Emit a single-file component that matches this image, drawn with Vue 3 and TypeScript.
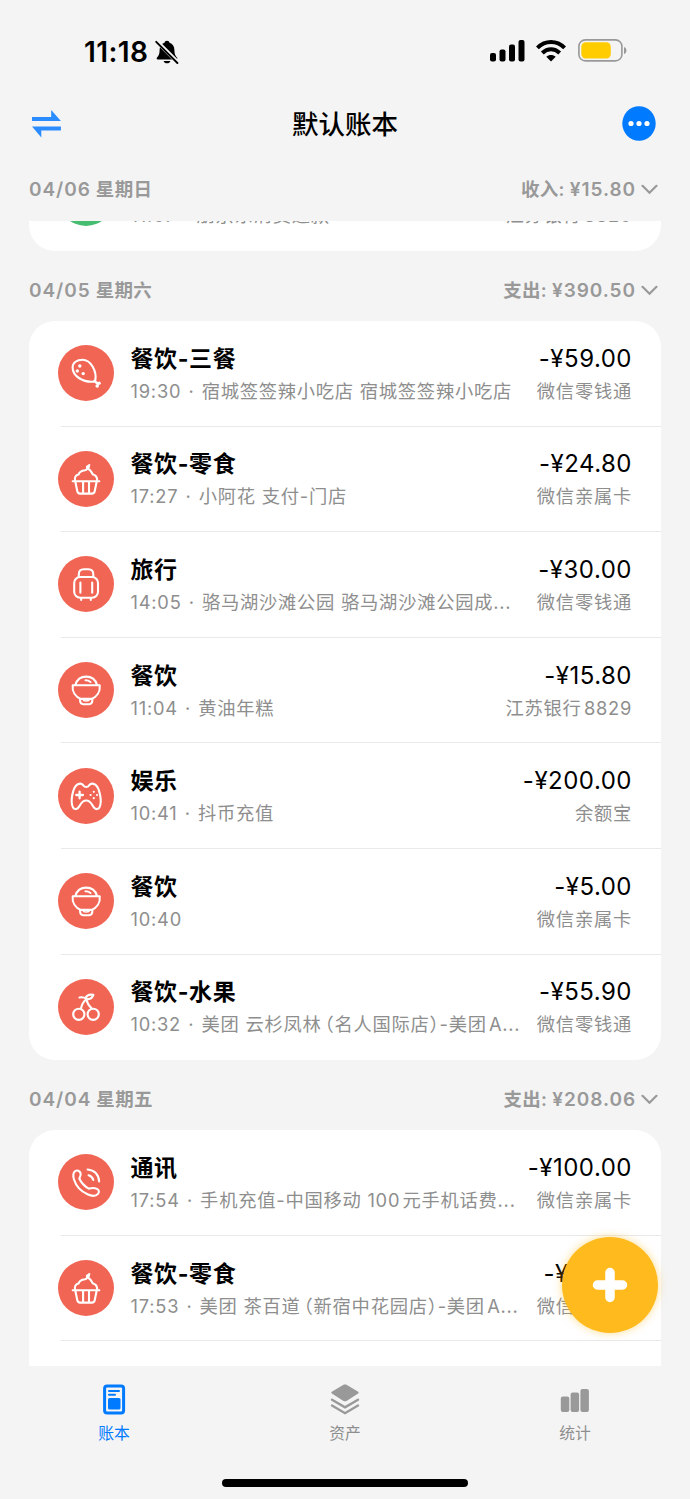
<script setup lang="ts">
type IconName = 'drumstick' | 'cupcake' | 'suitcase' | 'bowl' | 'gamepad' | 'cherry' | 'phone' | 'none'

interface Entry {
  icon: IconName
  title: string
  time: string
  note?: string
  amount: string
  account: string
  tone?: 'green'
}

interface Day {
  date: string
  weekday: string
  label: string
  total: string
  entries: Entry[]
}

const current: Day = {
  date: '04/06',
  weekday: '星期日',
  label: '收入:',
  total: '¥15.80',
  entries: [
    { icon: 'none', title: '退款', time: '11:37', note: '朋京东消费退款', amount: '+¥15.80', account: '江苏银行8829', tone: 'green' },
  ],
}

const days: Day[] = [
  current,
  {
    date: '04/05',
    weekday: '星期六',
    label: '支出:',
    total: '¥390.50',
    entries: [
      { icon: 'drumstick', title: '餐饮-三餐', time: '19:30', note: '宿城签签辣小吃店 宿城签签辣小吃店', amount: '-¥59.00', account: '微信零钱通' },
      { icon: 'cupcake', title: '餐饮-零食', time: '17:27', note: '小阿花 支付-门店', amount: '-¥24.80', account: '微信亲属卡' },
      { icon: 'suitcase', title: '旅行', time: '14:05', note: '骆马湖沙滩公园 骆马湖沙滩公园成...', amount: '-¥30.00', account: '微信零钱通' },
      { icon: 'bowl', title: '餐饮', time: '11:04', note: '黄油年糕', amount: '-¥15.80', account: '江苏银行8829' },
      { icon: 'gamepad', title: '娱乐', time: '10:41', note: '抖币充值', amount: '-¥200.00', account: '余额宝' },
      { icon: 'bowl', title: '餐饮', time: '10:40', amount: '-¥5.00', account: '微信亲属卡' },
      { icon: 'cherry', title: '餐饮-水果', time: '10:32', note: '美团 云杉凤林（名人国际店）-美团A...', amount: '-¥55.90', account: '微信零钱通' },
    ],
  },
  {
    date: '04/04',
    weekday: '星期五',
    label: '支出:',
    total: '¥208.06',
    entries: [
      { icon: 'phone', title: '通讯', time: '17:54', note: '手机充值-中国移动 100元手机话费...', amount: '-¥100.00', account: '微信亲属卡' },
      { icon: 'cupcake', title: '餐饮-零食', time: '17:53', note: '美团 茶百道（新宿中花园店）-美团A...', amount: '-¥19.90', account: '微信亲属卡' },
      { icon: 'none', title: '餐饮', time: '12:10', amount: '-¥12.00', account: '微信零钱通' },
    ],
  },
]

const parts = (note: string): string[] => note.split(/([（）])/)
const partClass = (p: string): string => (p === '（' ? 'open' : p === '）' ? 'close' : '')
</script>

<template>
  <div class="screen">
    <div class="status">
      <div class="clock">
        <span>11:18</span>
        <svg class="bell" width="24" height="24" viewBox="0 0 24 24">
          <path d="M12 .8c1.500 0 2.300.9 2.500 2 3.200 1 4.900 3.700 4.900 7.200 0 4.300 1.100 6 2.600 7.500.7.800.4 1.900-.8 1.900H2.800c-1.200 0-1.500-1.100-.8-1.900C3.500 16 4.600 14.300 4.600 10c0-3.500 1.700-6.200 4.900-7.200.2-1.100 1-2 2.500-2zM8.600 21h6.800c-.4 1.500-1.700 2.300-3.400 2.300S9 22.500 8.600 21z" fill="#000" />
          <path d="M1.500 1.100 23 22.600" stroke="#f4f4f4" stroke-width="4" />
          <path d="M1.200 1.800 22.400 23" stroke="#000" stroke-width="1.900" stroke-linecap="round" />
        </svg>
      </div>
      <div class="signals">
        <svg width="35" height="22" viewBox="0 0 35 22">
          <rect x="0" y="13" width="6" height="8.500" rx="2" />
          <rect x="9.500" y="9.500" width="6" height="12" rx="2" />
          <rect x="19" y="4.500" width="6" height="17" rx="2" />
          <rect x="28.500" y="0" width="6" height="21.500" rx="2" />
        </svg>
        <svg width="30" height="22" viewBox="0 0 30 22">
          <g fill="none" stroke="#000" stroke-width="4">
            <path d="M1.400 7.900C5.200 4.100 9.900 2 15 2s9.800 2.100 13.600 5.900" />
            <path d="M6.300 13C8.800 10.600 11.700 9.300 15 9.300s6.200 1.300 8.700 3.700" />
          </g>
          <path d="M15 21.500l-4.700-4.700c2.700-2.400 6.700-2.400 9.400 0z" />
        </svg>
        <svg width="49" height="24" viewBox="0 0 49 24">
          <rect x=".9" y=".9" width="43" height="21" rx="6.500" fill="none" stroke="#999" stroke-width="1.600" />
          <rect x="3.300" y="3.300" width="29.500" height="16.200" rx="4.500" fill="#fc0" />
          <path d="M46 8c3.200.8 3.200 6.200 0 7z" fill="#999" />
        </svg>
      </div>
    </div>

    <header class="nav">
      <svg width="30" height="28" viewBox="0 0 30 28" fill="#2b8cff">
        <path d="M0 7h19.200V0L28.900 11H0zM28.900 16.600H0l9.300 11v-7h19.600z" />
      </svg>
      <h1>默认账本</h1>
      <svg width="34" height="35" viewBox="0 0 34 35">
        <ellipse cx="17" cy="17.500" rx="16.700" ry="17.300" fill="#007aff" />
        <g fill="#fff"><circle cx="9" cy="17.500" r="2.600" /><circle cx="17" cy="17.500" r="2.600" /><circle cx="25" cy="17.500" r="2.600" /></g>
      </svg>
    </header>

    <div class="day-head pinned">
      <div class="date"><span class="num">{{ current.date }}</span><span>{{ current.weekday }}</span></div>
      <div class="sum"><span>{{ current.label }}</span><span class="num">{{ current.total }}</span>
        <svg width="17" height="11" viewBox="0 0 17 11"><path d="M1.500 1.800 8.500 8.800 15.500 1.800" /></svg>
      </div>
    </div>

    <main class="list">
      <section v-for="(day, di) in days" :key="di">
        <div v-if="di > 0" class="day-head">
          <div class="date"><span class="num">{{ day.date }}</span><span>{{ day.weekday }}</span></div>
          <div class="sum"><span>{{ day.label }}</span><span class="num">{{ day.total }}</span>
            <svg width="17" height="11" viewBox="0 0 17 11"><path d="M1.500 1.800 8.500 8.800 15.500 1.800" /></svg>
          </div>
        </div>
        <div class="card">
          <article v-for="(e, i) in day.entries" :key="i" class="row">
            <svg class="badge" :class="e.tone" viewBox="0 0 56 56">
              <circle class="disc" cx="28" cy="28" r="28" />
              <g v-if="e.icon === 'drumstick'" class="ln">
                <path d="M35.500 36.600C25.500 37.500 14.600 31.500 14.600 22.500c0-5 4.400-7.800 9.900-7.800C33 14.700 39 26.500 37.300 35.200z" />
                <path d="M36.600 36.200 40 38.800" stroke-width="2.600" />
                <circle class="dot" cx="41.200" cy="38.200" r="1.600" /><circle class="dot" cx="39.200" cy="41" r="1.800" />
                <circle class="dot" cx="21.800" cy="21" r="1.700" /><circle class="dot" cx="19.300" cy="26" r="1.700" /><circle class="dot" cx="25.200" cy="28.600" r="1.700" />
              </g>
              <g v-else-if="e.icon === 'cupcake'" class="ln">
                <path d="M17 29.500c-.6-3 .8-5.600 3.600-6 .6-3 3.600-4 6.400-4.300 1.900-.3 2.500-1.800 1.900-3.400l2.400-1.800-1 3.800c3.400 1.900 3.300 4.300 4.700 5.700 2.900.7 4.200 3.200 4.200 6" />
                <path d="M14.700 30.200h26.600M17.300 30.500l2 9.800c.3 1.500 1.200 2.300 2.700 2.300h12c1.500 0 2.400-.8 2.700-2.300l2-9.800M25.100 30.500v12M31 30.500v12" />
              </g>
              <g v-else-if="e.icon === 'suitcase'" class="ln">
                <rect x="16.200" y="21" width="23.800" height="20.700" rx="6" />
                <path d="M20.800 21v-2.500c0-3.600 1.700-5.200 5-5.200h4.500c3.300 0 5 1.600 5 5.200V21M22.400 26.500v10.200M34.200 26.500v10.200M23.200 42v2M32.800 42v2" />
              </g>
              <g v-else-if="e.icon === 'bowl'" class="ln">
                <path d="M14.700 23.300h27c.8 6.400-3 11.400-8 13.600h-11c-5-2.200-8.800-7.200-8-13.600zM17.400 22.800c1.500-5 5.600-8.200 10.800-8.200s9.300 3.200 10.800 8.200" />
                <path d="M22 37.300c0 3.200 1 4.900 3.200 4.900h6c2.200 0 3.200-1.700 3.200-4.900M27.500 18.300c2 0 3.600.6 5 1.700" />
                <path d="M25.500 38.600c1.700.4 3.800.4 5.500 0" stroke-width="1.500" />
              </g>
              <g v-else-if="e.icon === 'gamepad'" class="ln">
                <path d="M28.200 19c1.700 0 2.200-.7 3.200-2 1.200-1.500 3.700-1.500 5.200-.8 5.200 2.600 7.800 17.800 4.800 23.400-1 1.800-3.500 2-5 .4-2.500-2.600-3.200-7.500-8.200-7.500s-5.700 4.900-8.200 7.500c-1.500 1.600-4 1.400-5-.4-3-5.600-.4-20.800 4.800-23.400 1.500-.7 4-.7 5.200.8 1 1.300 1.500 2 3.200 2z" />
                <path d="M18.300 27h6.600M21.600 23.700v6.600" stroke-width="2.300" />
                <circle class="dot" cx="35.800" cy="23.800" r="1.100" /><circle class="dot" cx="35.800" cy="30.200" r="1.100" /><circle class="dot" cx="32.600" cy="27" r="1.100" /><circle class="dot" cx="39" cy="27" r="1.100" />
              </g>
              <g v-else-if="e.icon === 'cherry'" class="ln">
                <circle cx="20.800" cy="35.300" r="5.600" /><circle cx="35.200" cy="35.300" r="5.600" />
                <path d="M21.500 18.500c2.700-.5 4.800-.2 6.500 1.200M28.300 20.500c-3 2.200-4.600 5-5.300 9M28.300 20.500c1 4 2.800 6.600 5.500 9M27.400 19.500c1.200-3.400 4.400-4.300 8-3.600-1.200 3.300-4 5-8 3.600z" />
              </g>
              <g v-else-if="e.icon === 'phone'" class="ln">
                <path d="M17.300 17c1.800-1.200 4.300-.3 5.200 2 .8 2-.4 4-1.200 5.500 1.800 4 5.300 7.800 9.500 10.200 2.300-.8 5.400-1.200 8.200.2 2.200 1.200 2.400 3.500 1 5-2.500 2.700-6.600 2.300-10.500.4-6.500-3-11.700-9-13.500-14.800-1-3.300-.8-7 1.300-8.500z" />
                <path d="M29.600 15.500c6.700.5 11.300 5 11.500 12M30.600 21.200c2.700.7 4 2 4.700 4.700" />
              </g>
            </svg>
            <div class="info">
              <div class="line top">
                <b>{{ e.title }}</b><span class="amount">{{ e.amount }}</span>
              </div>
              <div class="line sub">
                <span class="note">{{ e.time }}<template v-if="e.note"><i>·</i><span v-for="(p, k) in parts(e.note)" :key="k" :class="partClass(p)">{{ p }}</span></template></span>
                <span>{{ e.account }}</span>
              </div>
            </div>
          </article>
        </div>
      </section>
    </main>

    <button class="fab" aria-label="add">
      <svg width="36" height="36" viewBox="0 0 36 36"><path d="M18 5.500v25M5.500 18h25" stroke="#fff" stroke-width="9.500" stroke-linecap="round" /></svg>
    </button>

    <footer class="tabs">
      <div class="tab on">
        <svg width="30" height="32" viewBox="0 0 30 32">
          <rect x="5.600" y="1.900" width="19" height="27" rx="2.500" fill="none" stroke="#007aff" stroke-width="3" />
          <path d="M10 6.900h10M10 10.800h6" stroke="#007aff" stroke-width="2" stroke-linecap="round" />
          <rect x="9" y="14" width="12.500" height="11.500" rx="1.500" fill="#007aff" />
        </svg>
        <span>账本</span>
      </div>
      <div class="tab">
        <svg width="30" height="32" viewBox="0 0 30 32" fill="#999">
          <path d="M13.500.8c1-.5 2-.5 3 0l11.300 6.700c1.200.7 1.200 1.500 0 2.200l-11.300 7.200c-1 .6-2 .6-3 0L2.200 9.700C1 9 1 8.200 2.200 7.500z" />
          <path d="M2 15.700l13 7.700 13-7.700M2 21.500l13 7.700 13-7.700" fill="none" stroke="#999" stroke-width="2.400" stroke-linecap="round" />
        </svg>
        <span>资产</span>
      </div>
      <div class="tab">
        <svg width="30" height="32" viewBox="0 0 30 32" fill="#999">
          <rect x=".8" y="12.500" width="8.500" height="15.500" rx="2" /><rect x="10.600" y="8.500" width="8.500" height="19.500" rx="2" /><rect x="20.400" y="5" width="8.500" height="23" rx="2" />
        </svg>
        <span>统计</span>
      </div>
    </footer>
    <div class="home"></div>
  </div>
</template>

<style>
body {
  background: #f4f4f4;
}
</style>

<style scoped>
.screen {
  position: relative;
  box-sizing: border-box;
  width: 690px;
  height: 1499px;
  display: flex;
  flex-direction: column;
  overflow: hidden;
  background: #f4f4f4;
  color: #000;
  font-family: Inter, "Noto Sans CJK SC", sans-serif;
}
svg {
  display: block;
  flex: none;
}
.status {
  height: 99px;
  flex: none;
  box-sizing: border-box;
  padding: 4px 63px 0 84px;
  display: flex;
  justify-content: space-between;
  align-items: center;
}
.clock {
  display: flex;
  align-items: center;
  gap: 7px;
  font-size: 28px;
  font-weight: 600;
  letter-spacing: 0.4px;
}
.signals {
  display: flex;
  align-items: center;
  gap: 11.7px;
  padding-bottom: 2px;
}
.nav {
  height: 49px;
  flex: none;
  padding: 0 34px 0 32px;
  display: grid;
  grid-template-columns: 34px 1fr 34px;
  align-items: center;
}
h1 {
  margin: 0;
  padding: 0 0 2px 2px;
  font-size: 26.5px;
  font-weight: 500;
  text-align: center;
}
.day-head {
  height: 70px;
  box-sizing: border-box;
  flex: none;
  padding: 8px 32px 0 29px;
  display: flex;
  align-items: center;
  justify-content: space-between;
  font-size: 18.5px;
  line-height: 27px;
  font-weight: 600;
  letter-spacing: 0.3px;
  color: #999;
}
.pinned {
  height: 73px;
  padding-top: 10px;
}
.date {
  display: flex;
  align-items: baseline;
  gap: 5px;
}
.sum {
  display: flex;
  align-items: center;
  gap: 5px;
}
.num {
  font-size: 19px;
  letter-spacing: 0.95px;
}
.sum path {
  fill: none;
  stroke: #999;
  stroke-width: 2.2;
  stroke-linecap: round;
}
.list {
  height: 1145px;
  flex: none;
  overflow: hidden;
}
.list section:first-child {
  margin-top: -75.6px;
}
.card {
  margin: 0 29px;
  background: #fff;
  border-radius: 26px;
}
.row {
  height: 105.6px;
  box-sizing: border-box;
  padding: 0 0 0 29px;
  display: flex;
  align-items: center;
  gap: 16px;
  background: linear-gradient(#e9e9e9, #e9e9e9) 32px 100% / 100% 1px no-repeat;
}
.row:last-child {
  background: none;
}
.badge {
  width: 56px;
  height: 56px;
  margin-top: -1px;
}
.disc {
  fill: #f16555;
}
.green .disc {
  fill: #46bd70;
}
.ln {
  fill: none;
  stroke: #fff;
  stroke-width: 2.1;
  stroke-linecap: round;
  stroke-linejoin: round;
}
.dot {
  fill: #fff;
  stroke: none;
}
.info {
  flex: 1;
  min-width: 0;
  padding: 2px 29px 0 0;
}
.line {
  display: flex;
  justify-content: space-between;
  align-items: center;
  height: 32px;
  line-height: 32px;
  white-space: nowrap;
}
.top b {
  padding-left: 0.5px;
  font-size: 23px;
  font-weight: 700;
  letter-spacing: 0.6px;
}
.amount {
  font-size: 24px;
  letter-spacing: 0.5px;
}
.sub {
  font-size: 18.3px;
  letter-spacing: 0.75px;
  color: #8e8e8e;
  text-autospace: normal;
}
.note {
  padding-left: 0.6px;
}
.sub i {
  font-style: normal;
  margin: 0 7.2px;
}
.open,
.close {
  font-feature-settings: "halt";
}
.open {
  padding-left: 3px;
}
.fab {
  position: absolute;
  left: 561.6px;
  top: 1236.7px;
  width: 96.6px;
  height: 96.6px;
  padding: 0;
  border: 0;
  border-radius: 50%;
  background: #ffbb1e;
  box-shadow: 0 0 8px rgba(255, 187, 30, 0.5);
  display: flex;
  align-items: center;
  justify-content: center;
}
.tabs {
  flex: none;
  height: 113px;
  display: grid;
  grid-template-columns: repeat(3, 230px);
  box-sizing: border-box;
  padding-top: 18px;
}
.tab {
  display: flex;
  flex-direction: column;
  align-items: center;
  gap: 6px;
  font-size: 15.8px;
  line-height: 23px;
  color: #8e8e8e;
}
.on {
  color: #007aff;
  padding-right: 2px;
}
.home {
  flex: none;
  width: 246px;
  height: 8px;
  border-radius: 4px;
  background: #000;
  margin: 0 auto;
}
</style>
